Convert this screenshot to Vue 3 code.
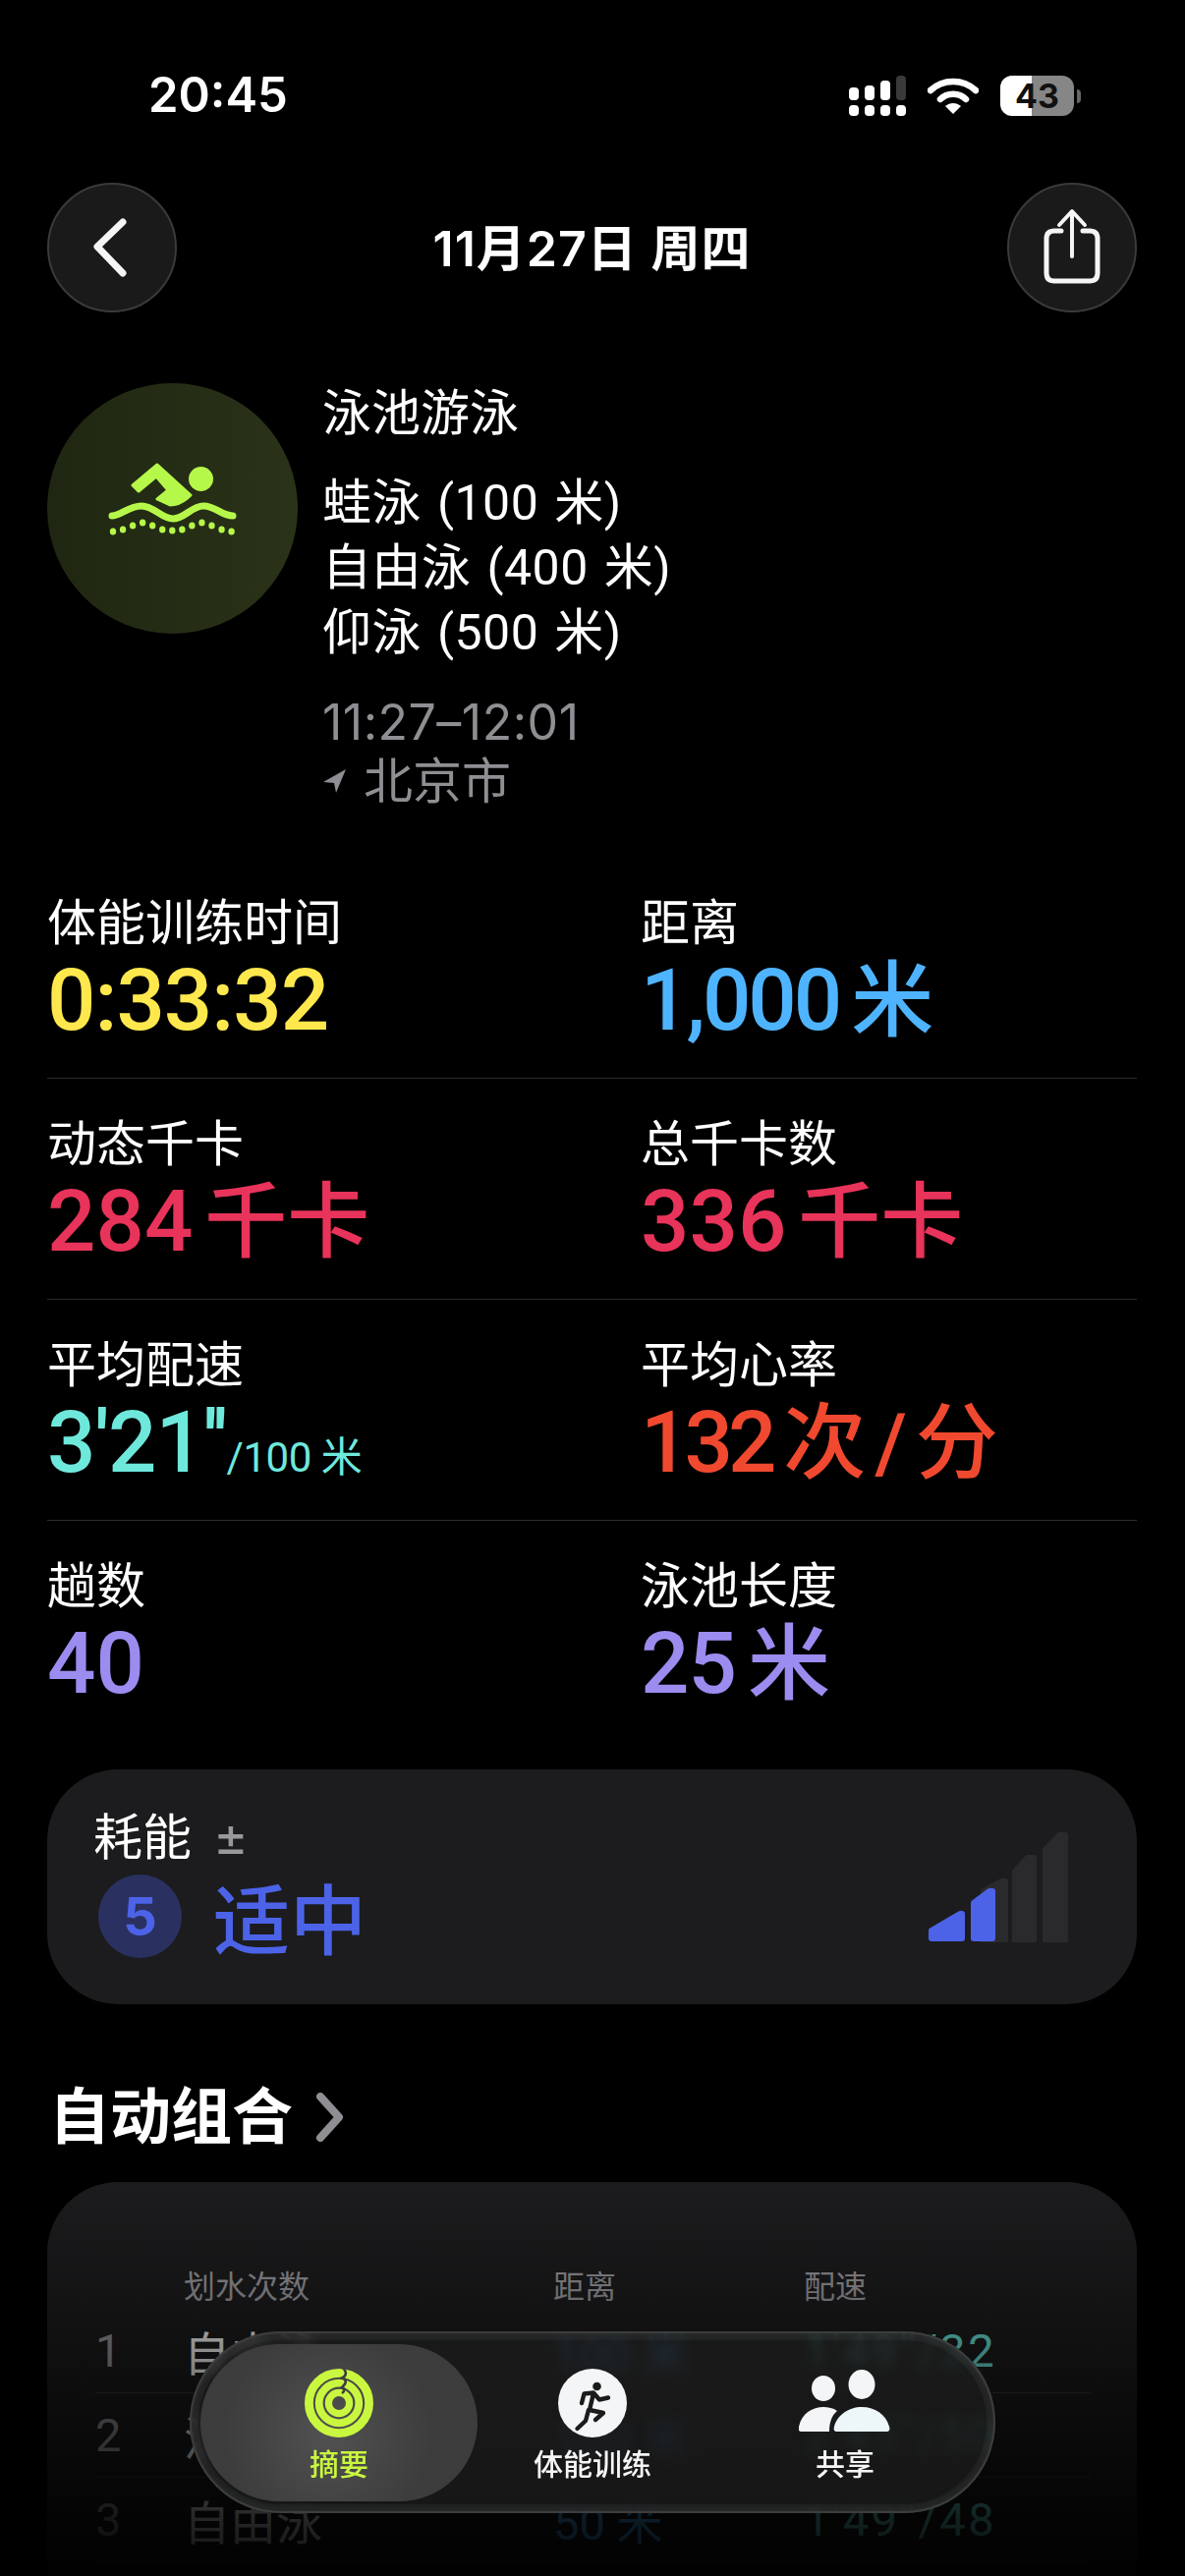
<template>
  <div class="screen">
    <div class="status-bar">
      <span class="time">20:45</span>
      <div class="status-icons">
        <svg class="signal" width="58" height="41" viewBox="0 0 58 41">
          <rect x="0" y="12" width="10" height="13" rx="4" fill="#fff" />
          <rect x="16" y="10" width="10" height="15" rx="4" fill="#fff" />
          <rect x="32" y="5" width="10" height="20" rx="4" fill="#fff" />
          <rect x="48" y="0" width="10" height="25" rx="4" fill="#3a3a3a" />
          <rect x="0" y="30" width="10" height="11" rx="4" fill="#fff" />
          <rect x="16" y="30" width="10" height="11" rx="4" fill="#fff" />
          <rect x="32" y="30" width="10" height="11" rx="4" fill="#fff" />
          <rect x="48" y="30" width="10" height="11" rx="4" fill="#fff" />
        </svg>
        <svg class="wifi" width="52" height="38" viewBox="0 0 52 38">
          <path d="M3 13 C16 1 36 1 49 13" fill="none" stroke="#fff" stroke-width="6.5" stroke-linecap="round" />
          <path d="M13 22 C20 15 32 15 39 22" fill="none" stroke="#fff" stroke-width="6.5" stroke-linecap="round" />
          <path d="M18 29 C23 25 29 25 34 29 L26 37 Z" fill="#fff" />
        </svg>
        <div class="battery">
          <span>43</span>
        </div>
        <div class="battery-tip"></div>
      </div>
    </div>

    <div class="nav-row">
      <button class="round-btn">
        <svg width="48" height="66" viewBox="0 0 48 66">
          <path d="M35 8 L9 33 L35 60" fill="none" stroke="#f5f5f5" stroke-width="7" stroke-linecap="round" stroke-linejoin="round" transform="translate(0 -1)" />
        </svg>
      </button>
      <div class="nav-title">11月27日 周四</div>
      <button class="round-btn">
        <svg width="64" height="80" viewBox="0 0 64 80">
          <path d="M21 23 H14 Q6 23 6 31 V66 Q6 74 14 74 H50 Q58 74 58 66 V31 Q58 23 50 23 H43" fill="none" stroke="#f5f5f5" stroke-width="5" stroke-linecap="round" />
          <path d="M32 4 V49" fill="none" stroke="#f5f5f5" stroke-width="4" stroke-linecap="round" />
          <path d="M19 17 L32 3 L45 17" fill="none" stroke="#f5f5f5" stroke-width="4" stroke-linecap="round" stroke-linejoin="round" />
        </svg>
      </button>
    </div>

    <div class="hero">
      <div class="hero-icon">
        <svg width="140" height="80" viewBox="105 475 140 80">
          <circle cx="203.5" cy="494.5" r="12.5" fill="#b6f84a" />
          <path d="M134 501 L159 480 L193 511 C186 518 180 521 172 521 L159 515 L170 506 L158 492 L140 507 Z" fill="#b6f84a" stroke="#b6f84a" stroke-width="3" stroke-linejoin="round" />
          <path d="M113 532 C122 532 130 522 143 522 C156 522 163 535 175 535 C187 535 194 522 206 522 C219 522 224 532 236 532" fill="none" stroke="#b6f84a" stroke-width="7" stroke-linecap="round" />
          <ellipse v-for="d in waveDots" :key="d.x" :cx="d.x" :cy="d.y" rx="3.2" ry="3.6" fill="#b6f84a" />
        </svg>
      </div>
      <div class="hero-text">
        <div class="hero-title">泳池游泳</div>
        <div class="hero-lines">
          <div>蛙泳 (100 米)</div>
          <div>自由泳 (400 米)</div>
          <div>仰泳 (500 米)</div>
        </div>
        <div class="hero-time">11:27–12:01</div>
        <div class="hero-place">
          <svg width="26" height="26" viewBox="0 0 26 26">
            <path d="M24 1 L1 14 L12 15 L14 25 Z" fill="#8e8e93" />
          </svg>
          <span>北京市</span>
        </div>
      </div>
    </div>

    <div class="stats">
      <div v-for="(row, i) in stats" :key="i" class="stat-row">
        <div v-for="s in row" :key="s.label" class="stat">
          <div class="stat-label">{{ s.label }}</div>
          <div class="stat-value" :class="s.tone">
            <span :class="s.track">{{ s.value }}</span>
            <span v-if="s.unit" class="stat-unit">{{ s.unit }}</span>
            <span v-if="s.small" class="stat-small">{{ s.small }}</span>
          </div>
        </div>
      </div>
    </div>

    <div class="effort">
      <div class="effort-left">
        <div class="effort-label">耗能<span class="plus-minus">±</span></div>
        <div class="effort-main">
          <span class="effort-badge">5</span>
          <span class="effort-word">适中</span>
        </div>
      </div>
      <svg class="effort-bars" width="146" height="112" viewBox="0 0 146 112">
        <g stroke-linejoin="round" stroke-width="6">
          <path d="M121 110 V18 L135 3 H141 V110 Z" fill="#2a2a2c" stroke="#2a2a2c" />
          <path d="M90 110 V40 L103 26 H109 V110 Z" fill="#2a2a2c" stroke="#2a2a2c" />
          <path d="M58 110 V60 L76 50 H80 V110 Z" fill="#2a2a2c" stroke="#2a2a2c" />
          <path d="M48 108 V72 L64 60 H67 V108 Z" fill="#4c63e8" stroke="#4c63e8" />
          <path d="M5 108 V100 L34 83 H36 V108 Z" fill="#4c63e8" stroke="#4c63e8" />
        </g>
      </svg>
    </div>

    <div class="group-title">
      <span>自动组合</span>
      <svg width="30" height="50" viewBox="0 0 30 50">
        <path d="M5 4 L24 25 L5 46" fill="none" stroke="#8e8e93" stroke-width="8" stroke-linecap="round" stroke-linejoin="round" />
      </svg>
    </div>

    <div class="table-card">
      <div class="table-head">
        <span></span>
        <span>划水次数</span>
        <span>距离</span>
        <span>配速</span>
      </div>
      <div v-for="r in laps" :key="r.no" class="table-row">
        <span class="cell-no">{{ r.no }}</span>
        <span class="cell-name">{{ r.name }}</span>
        <span class="cell-dist">{{ r.dist }}</span>
        <span class="cell-pace">{{ r.pace }}</span>
      </div>
    </div>

    <div class="bottom-fade"></div>

    <div class="tab-bar">
      <div class="tab active">
        <svg width="70" height="70" viewBox="0 0 70 70">
          <g fill="none" stroke="#c9f73f">
            <circle cx="35" cy="35" r="30.6" stroke-width="8.8" />
            <circle cx="35" cy="35" r="20.3" stroke-width="7.8" />
            <circle cx="35" cy="35" r="10.6" stroke-width="7.2" />
          </g>
          <path d="M39 -1 C43 3 43 7 38 9.5 C43 11 43 15 38 19 C41 20 41 23 38 25" fill="none" stroke="#3e3e3e" stroke-width="2.6" />
        </svg>
        <span>摘要</span>
      </div>
      <div class="tab">
        <svg width="70" height="70" viewBox="0 0 70 70">
          <circle cx="35" cy="35" r="35" fill="#f3f5f6" />
          <circle cx="39.5" cy="18" r="4.3" fill="#1b1b1b" />
          <path d="M24 35 L26.5 25.5 L36 24.5 L42 31.5 L51 29.5 M36 25 L32 42 L46 45 L38 52 M31 42 L28 53 L19.5 61" fill="none" stroke="#1b1b1b" stroke-width="4.4" stroke-linecap="round" stroke-linejoin="round" />
        </svg>
        <span>体能训练</span>
      </div>
      <div class="tab">
        <svg width="94" height="70" viewBox="0 0 94 70">
          <ellipse cx="25" cy="20" rx="12" ry="13" fill="#f3f5f6" />
          <ellipse cx="64" cy="16" rx="13.5" ry="15" fill="#f3f5f6" />
          <path d="M3 64 C0 64 -1 62 0 59 C3 45 14 39 25 39 C30 39 35 40 39 43 C34 47 31 54 31 64 Z" fill="#f3f5f6" />
          <path d="M39 64 C36 64 35 62 36 59 C39 47 51 39 64 39 C78 39 89 47 92 59 C93 62 92 64 89 64 Z" fill="#edf7fa" />
        </svg>
        <span>共享</span>
      </div>
    </div>
  </div>
</template>

<script setup>
// 波浪下方的小圆点
const waveY = [548, 546, 542, 539, 542, 546, 547, 546, 542, 539, 542, 546, 548];
const waveDots = waveY.map((y, i) => ({ x: 114 + i * 10.05, y }));

const stats = [
  [
    { label: "体能训练时间", value: "0:33:32", tone: "yellow", track: "tight-s" },
    { label: "距离", value: "1,000", unit: "米", tone: "blue", track: "tight-m" },
  ],
  [
    { label: "动态千卡", value: "284", unit: "千卡", tone: "red" },
    { label: "总千卡数", value: "336", unit: "千卡", tone: "red" },
  ],
  [
    { label: "平均配速", value: "3'21''", small: "/100 米", tone: "teal", track: "tight-s" },
    { label: "平均心率", value: "132", unit: "次 / 分", tone: "orange", track: "tight-l" },
  ],
  [
    { label: "趟数", value: "40", tone: "purple" },
    { label: "泳池长度", value: "25", unit: "米", tone: "purple", track: "tight-s" },
  ],
];

const laps = [
  { no: 1, name: "自由泳", dist: "100 米", pace: "1'49''/32" },
  { no: 2, name: "混合泳", dist: "100 米", pace: "2'45''/50" },
  { no: 3, name: "自由泳", dist: "50 米", pace: "1'49''/48" },
];
</script>

<style>
html,
body {
  background: #000;
}
</style>

<style scoped>
.screen {
  position: relative;
  width: 1206px;
  height: 2622px;
  overflow: hidden;
  background: #000;
  color: #fff;
  font-family: Inter, "Noto Sans CJK SC", sans-serif;
}

.status-bar {
  height: 186px;
  display: flex;
  align-items: flex-start;
  justify-content: space-between;
  padding: 76px 106px 0 151px;
  box-sizing: border-box;
}

.time {
  font-size: 49px;
  font-weight: 600;
  line-height: 42px;
}

.status-icons {
  display: flex;
  align-items: flex-start;
  margin-top: 1px;
}

.wifi {
  margin: 2px 22px 0 22px;
}

.battery {
  width: 75px;
  height: 41px;
  border-radius: 12px;
  background: linear-gradient(90deg, #fff 0, #fff 43%, #868686 43%, #868686 100%);
  color: #111;
  font-size: 34px;
  font-weight: 700;
  line-height: 41px;
  text-align: center;
}

.battery-tip {
  width: 4px;
  height: 14px;
  margin: 14px 0 0 3px;
  border-radius: 0 4px 4px 0;
  background: #666;
}

.nav-row {
  display: flex;
  align-items: center;
  justify-content: space-between;
  padding: 0 49px 0 48px;
}

.round-btn {
  width: 132px;
  height: 132px;
  padding: 0;
  display: flex;
  align-items: center;
  justify-content: center;
  border-radius: 50%;
  border: 2px solid #3a3a3a;
  background: #1a1a1a;
  box-sizing: border-box;
}

.nav-title {
  margin-top: -6px;
  font-size: 50px;
  font-weight: 600;
  letter-spacing: 1px;
}

.hero {
  display: flex;
  gap: 25px;
  margin-top: 72px;
  padding-left: 48px;
}

.hero-icon {
  width: 255px;
  height: 255px;
  flex-shrink: 0;
  display: flex;
  align-items: center;
  justify-content: center;
  border-radius: 50%;
  background: linear-gradient(90deg, #1f2712, #2a3218);
}

.hero-icon svg {
  margin-top: -20px;
}

.hero-title {
  font-size: 50px;
  line-height: 60px;
}

.hero-lines {
  margin-top: 29px;
  font-family: Roboto, "Noto Sans CJK SC", sans-serif;
  font-size: 50px;
  letter-spacing: 0.5px;
  word-spacing: 3px;
  line-height: 66px;
}

.hero-time {
  margin-top: 28px;
  font-size: 50px;
  letter-spacing: 0.5px;
  line-height: 60px;
  color: #8e8e93;
}

.hero-place {
  display: flex;
  align-items: center;
  gap: 16px;
  font-size: 50px;
  line-height: 60px;
  color: #8e8e93;
}

.stats {
  margin: 48px 49px 0 48px;
}

.stat-row {
  display: grid;
  grid-template-columns: 604px 1fr;
  padding: 36px 0 28px;
  border-bottom: 1px solid #2c2c2e;
}

.stat-row:last-child {
  border-bottom: 0;
}

.stat-label {
  font-size: 50px;
  line-height: 60px;
}

.stat-value {
  display: flex;
  align-items: baseline;
  height: 100px;
  font-family: Roboto, "Noto Sans CJK SC", sans-serif;
  font-size: 87px;
  font-weight: 500;
  line-height: 99px;
  white-space: pre;
}

.tight-s {
  letter-spacing: -1px;
}

.tight-m {
  letter-spacing: -3px;
}

.tight-l {
  letter-spacing: -5px;
}

.stat-unit {
  margin-left: 12px;
  font-size: 84px;
  word-spacing: -12px;
}

.stat-small {
  font-size: 42px;
  font-weight: 400;
  letter-spacing: -0.5px;
}

.yellow {
  color: #ffe84d;
}

.blue {
  color: #4fb4ff;
}

.red {
  color: #e8335a;
}

.teal {
  color: #6fe8dc;
}

.orange {
  color: #f0492f;
}

.purple {
  color: #9b8cf0;
}

.effort {
  display: flex;
  justify-content: space-between;
  height: 239px;
  margin: 29px 49px 0 48px;
  padding: 39px 68px 0 47px;
  box-sizing: border-box;
  border-radius: 72px;
  background: #1c1c1e;
}

.effort-label {
  display: flex;
  align-items: center;
  font-size: 50px;
  line-height: 60px;
}

.plus-minus {
  margin-left: 22px;
  font-size: 54px;
  color: #98989d;
}

.effort-main {
  display: flex;
  align-items: center;
  gap: 32px;
  height: 100px;
  margin-left: 5px;
}

.effort-badge {
  width: 85px;
  height: 85px;
  display: flex;
  align-items: center;
  justify-content: center;
  border-radius: 50%;
  background: #2a3160;
  color: #4c63e8;
  font-size: 54px;
  font-weight: 700;
}

.effort-word {
  font-size: 78px;
  font-weight: 500;
  color: #4c63e8;
}

.effort-bars {
  margin-top: 25px;
}

.group-title {
  display: flex;
  align-items: center;
  gap: 23px;
  margin: 80px 0 0 50px;
  height: 70px;
  font-size: 62px;
  font-weight: 700;
  line-height: 70px;
}

.table-card {
  margin: 31px 49px 0 48px;
  padding-top: 85px;
  height: 500px;
  box-sizing: border-box;
  border-radius: 72px 72px 0 0;
  background: #1c1c1e;
}

.table-head,
.table-row {
  display: grid;
  grid-template-columns: 90px 376px 255px 1fr;
  margin: 0 47px 0 49px;
  white-space: nowrap;
}

.table-head {
  font-size: 32px;
  line-height: 44px;
  color: #9a9a9e;
}

.table-row {
  align-items: center;
  height: 86px;
  border-bottom: 1px solid #3a3a3c;
  box-sizing: border-box;
  font-family: Roboto, "Noto Sans CJK SC", sans-serif;
  font-size: 47px;
}

.cell-no {
  color: #98989d;
}

.cell-dist {
  color: #4fb4ff;
}

.cell-pace {
  letter-spacing: 2.5px;
  color: #6fe8dc;
}

.bottom-fade {
  position: absolute;
  left: 0;
  right: 0;
  top: 2221px;
  bottom: 0;
  background: linear-gradient(180deg, rgba(0, 0, 0, 0) 0, rgba(0, 0, 0, 0.45) 175px, rgba(0, 0, 0, 0.86) 345px, rgba(0, 0, 0, 0.94) 100%);
}

.tab-bar {
  position: absolute;
  left: 193px;
  top: 2373px;
  width: 820px;
  height: 185px;
  display: grid;
  grid-template-columns: 282px 234px 280px;
  padding: 13px 0 12px 11px;
  box-sizing: border-box;
  border-radius: 93px;
  background: rgba(28, 28, 28, 0.78);
  backdrop-filter: blur(6px);
  box-shadow: inset 0 0 0 2px #3d3d3d, inset 0 0 0 9px rgba(255, 255, 255, 0.03), inset 0 0 10px 3px rgba(120, 150, 150, 0.14);
}

.tab {
  display: flex;
  flex-direction: column;
  align-items: center;
  padding-top: 25px;
  font-size: 30px;
  font-weight: 500;
  line-height: 38px;
  color: #f5f5f5;
}

.tab svg {
  margin-bottom: 8px;
}

.tab.active {
  width: 282px;
  border-radius: 80px;
  background: radial-gradient(circle at 130px 90px, rgba(84, 84, 84, 0.96), rgba(62, 62, 62, 0.96) 60%);
  color: #c9f73f;
}
</style>
